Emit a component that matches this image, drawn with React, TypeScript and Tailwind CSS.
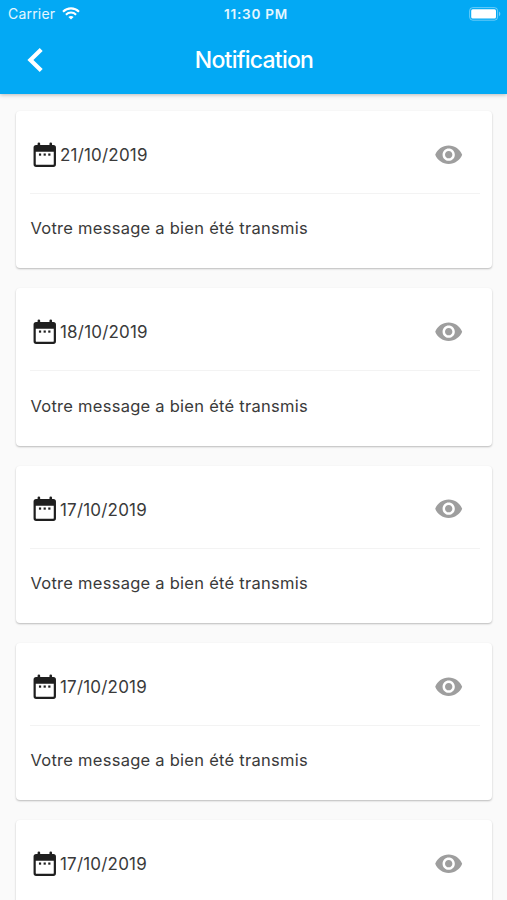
type Notification = { id: number; date: string; message?: string };

const notifications: Notification[] = [
  { id: 1, date: '21/10/2019', message: 'Votre message a bien été transmis' },
  { id: 2, date: '18/10/2019', message: 'Votre message a bien été transmis' },
  { id: 3, date: '17/10/2019', message: 'Votre message a bien été transmis' },
  { id: 4, date: '17/10/2019', message: 'Votre message a bien été transmis' },
  { id: 5, date: '17/10/2019' },
];

function WifiIcon() {
  return (
    <svg width="18" height="13" viewBox="0 0 18 13" fill="none" stroke="white">
      <path d="M1 4.7C5.5.3 12.5.3 17 4.7" strokeWidth="2.1" />
      <path d="M3.9 7.7c2.9-2.8 7.3-2.8 10.2 0" strokeWidth="2" />
      <path d="M9 12.6 6.4 10c1.5-1.4 3.7-1.4 5.2 0z" fill="white" stroke="none" />
    </svg>
  );
}

function BatteryIcon() {
  return (
    <svg width="32" height="14" viewBox="0 0 32 14">
      <rect x="0.6" y="0.6" width="28" height="12.6" rx="3.2" fill="none" stroke="white" strokeOpacity="0.4" strokeWidth="1" />
      <rect x="2.2" y="2.2" width="24.8" height="9.4" rx="1.5" fill="white" />
      <path d="M30 4.6c1.8.8 1.8 3.8 0 4.6z" fill="white" fillOpacity="0.45" />
    </svg>
  );
}

function CalendarIcon() {
  return (
    <svg width="29.4" height="29.4" viewBox="0 0 24 24" fill="#1f1f1f" className="shrink-0">
      <rect x="6.2" y="2" width="2.1" height="4" rx="1" />
      <rect x="15.9" y="2" width="2.1" height="4" rx="1" />
      <path
        fillRule="evenodd"
        d="M5 4h14.1a2.1 2.1 0 0 1 2.1 2.1v13.8a2.1 2.1 0 0 1-2.1 2.1H5a2.1 2.1 0 0 1-2.1-2.1V6.1A2.1 2.1 0 0 1 5 4zm-.3 5.5v10.1c0 .5.3.7.7.7h13.3c.4 0 .7-.2.7-.7V9.5H4.7z"
      />
      <rect x="7.3" y="11" width="1.8" height="1.8" />
      <rect x="11.1" y="11" width="1.8" height="1.8" />
      <rect x="14.9" y="11" width="1.8" height="1.8" />
    </svg>
  );
}

function EyeIcon() {
  return (
    <svg width="29.4" height="29.4" viewBox="0 0 24 24" fill="#9e9e9e" className="shrink-0">
      <path d="M12 4.5C7 4.5 2.73 7.61 1 12c1.73 4.39 6 7.5 11 7.5s9.27-3.11 11-7.5c-1.73-4.39-6-7.5-11-7.5zM12 17c-2.76 0-5-2.24-5-5s2.24-5 5-5 5 2.24 5 5-2.24 5-5 5zm0-8c-1.66 0-3 1.34-3 3s1.34 3 3 3 3-1.34 3-3-1.34-3-3-3z" />
    </svg>
  );
}

function NotificationCard({ date, message }: { date: string; message?: string }) {
  return (
    <article className="h-[157.2px] shrink-0 rounded-[4px] bg-white pl-[14px] pr-[12.5px] shadow-[0_1px_2px_rgba(0,0,0,0.26)]">
      <div className="flex h-[83px] items-center justify-between border-b border-[#f3f3f3] pt-[5px] pr-[16.5px]">
        <div className="flex items-center">
          <CalendarIcon />
          <span className="pt-px pl-[0.6px] text-[17px] leading-6 tracking-[0.2px]">{date}</span>
        </div>
        <EyeIcon />
      </div>
      {message && (
        <p className="pt-[22.3px] pl-[0.5px] text-[16.5px] leading-6 tracking-[0.26px] whitespace-nowrap">{message}</p>
      )}
    </article>
  );
}

export default function App() {
  return (
    <div className="flex h-[900px] w-[507px] flex-col overflow-hidden bg-[#fafafa] font-['Inter',sans-serif] text-[#3a3a3a]">
      <header className="z-10 h-[94px] shrink-0 bg-[#03a9f4] text-white shadow-[0_1px_4px_rgba(0,0,0,0.26)]">
        <div className="grid h-[27px] grid-cols-3 items-center pr-[6px] pl-[8px]">
          <div className="flex items-center gap-[7px]">
            <span className="text-[14px] tracking-[0.2px] text-white/90">Carrier</span>
            <WifiIcon />
          </div>
          <span className="pt-px pl-[3px] text-center text-[13.5px] font-semibold tracking-[0.8px] text-white/90">11:30 PM</span>
          <div className="flex justify-end">
            <BatteryIcon />
          </div>
        </div>
        <div className="grid h-[66px] grid-cols-[80px_1fr_80px] items-center">
          <button aria-label="Retour" className="pl-[26px]">
            <svg width="18" height="26" viewBox="0 0 18 26" fill="none" stroke="white" strokeWidth="4.2">
              <path d="M15.2 2.4 4.4 13l10.8 10.6" />
            </svg>
          </button>
          <h1 className="pl-px text-center text-[23px] font-medium tracking-[-0.75px]">Notification</h1>
        </div>
      </header>
      <main className="flex flex-col gap-[20px] pt-[17.2px] pr-[15px] pl-[16px]">
        {notifications.map((item) => (
          <NotificationCard key={item.id} date={item.date} message={item.message} />
        ))}
      </main>
    </div>
  );
}
